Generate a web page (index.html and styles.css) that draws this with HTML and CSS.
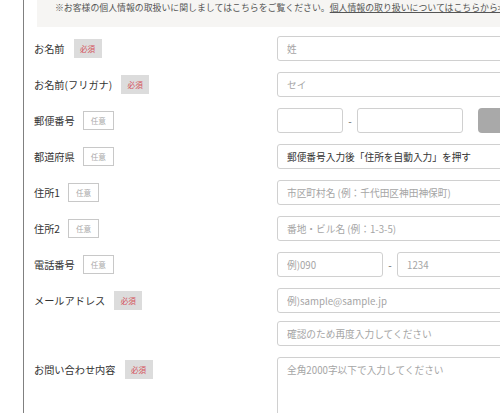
FILE: index.html
```html
<!DOCTYPE html>
<html lang="ja">
<head>
<meta charset="utf-8">
<title>お問い合わせ</title>
<link rel="stylesheet" href="styles.css">
</head>
<body>
<div class="page">
  <div class="notice">
    <p>※お客様の個人情報の取扱いに関しましてはこちらをご覧ください。<a href="#">個人情報の取り扱いについてはこちらから&gt;&gt;</a></p>
  </div>
  <form class="form">
    <div class="row">
      <div class="label">お名前<span class="badge req">必須</span></div>
      <div class="field"><input class="input full" placeholder="姓"></div>
    </div>
    <div class="row">
      <div class="label">お名前(フリガナ)<span class="badge req">必須</span></div>
      <div class="field"><input class="input full" placeholder="セイ"></div>
    </div>
    <div class="row">
      <div class="label">郵便番号<span class="badge opt">任意</span></div>
      <div class="field inline">
        <input class="input zip1">
        <span class="dash">-</span>
        <input class="input zip2">
        <button type="button" class="btn"></button>
      </div>
    </div>
    <div class="row">
      <div class="label">都道府県<span class="badge opt">任意</span></div>
      <div class="field"><div class="input full select">郵便番号入力後「住所を自動入力」を押す</div></div>
    </div>
    <div class="row">
      <div class="label">住所1<span class="badge opt">任意</span></div>
      <div class="field"><input class="input full" placeholder="市区町村名 (例：千代田区神田神保町)"></div>
    </div>
    <div class="row">
      <div class="label">住所2<span class="badge opt">任意</span></div>
      <div class="field"><input class="input full" placeholder="番地・ビル名 (例：1-3-5)"></div>
    </div>
    <div class="row">
      <div class="label">電話番号<span class="badge opt">任意</span></div>
      <div class="field inline">
        <input class="input tel" placeholder="例)090">
        <span class="dash">-</span>
        <input class="input tel" placeholder="1234">
      </div>
    </div>
    <div class="row">
      <div class="label">メールアドレス<span class="badge req">必須</span></div>
      <div class="field stack">
        <input class="input full" placeholder="例)sample@sample.jp">
        <input class="input full" placeholder="確認のため再度入力してください">
      </div>
    </div>
    <div class="row">
      <div class="label">お問い合わせ内容<span class="badge req">必須</span></div>
      <div class="field"><textarea class="input full area" placeholder="全角2000字以下で入力してください"></textarea></div>
    </div>
  </form>
</div>
</body>
</html>
```

FILE: styles.css
```css
html, body {
  margin: 0;
  padding: 0;
  background: #fff;
  overflow: hidden;
}
body {
  font-family: "Noto Sans CJK JP", "Noto Sans", sans-serif;
  color: #333;
  width: 500px;
  height: 413px;
}
.page {
  margin-left: 23px;
  border-left: 1px solid #808080;
  height: 413px;
  width: 700px;
}
.notice {
  margin-left: 13px;
  height: 27px;
  background: #f6f5f3;
  padding-left: 18px;
  box-sizing: border-box;
}
.notice p {
  margin: 0;
  padding-top: 2px;
  font-size: 8.9px;
  line-height: 12px;
  color: #555;
  white-space: nowrap;
}
.notice a {
  color: #555;
  text-decoration: underline;
}
.form {
  padding-left: 10px;
  padding-top: 9px;
  display: flex;
  flex-direction: column;
  gap: 11px;
}
.row {
  display: flex;
  align-items: flex-start;
}
.label {
  width: 243px;
  flex: none;
  height: 24px;
  display: flex;
  align-items: center;
  font-size: 10.2px;
  color: #333;
  white-space: nowrap;
}
.badge {
  margin-left: 9px;
  display: inline-flex;
  align-items: center;
  justify-content: center;
  height: 19px;
  font-size: 7.6px;
  box-sizing: border-box;
}
.req {
  width: 28px;
  background: #dcdcdc;
  color: #d4505a;
}
.opt {
  width: 31px;
  border: 1px solid #c8c8c8;
  background: #fff;
  color: #aaa;
  margin-left: 8px;
}
.field {
  display: flex;
}
.inline {
  align-items: center;
}
.stack {
  flex-direction: column;
  gap: 8px;
}
.input {
  font-family: "Noto Sans CJK JP", "Noto Sans", sans-serif;
  font-size: 9.7px;
  height: 25px;
  border: 1px solid #d0d0d0;
  border-radius: 3px;
  box-sizing: border-box;
  padding: 0 0 0 9px;
  margin: 0;
  background: #fff;
  color: #333;
  outline: none;
}
.input::placeholder {
  color: #a5a5a5;
}
.full {
  width: 260px;
}
.select {
  display: flex;
  align-items: center;
  color: #333;
}
.zip1 {
  width: 66px;
}
.zip2 {
  width: 106px;
}
.tel {
  width: 106px;
}
.dash {
  width: 14px;
  text-align: center;
  font-size: 10px;
  color: #666;
}
.btn {
  margin-left: 15px;
  width: 80px;
  height: 25px;
  border: none;
  border-radius: 4px;
  background: #a9a9a9;
  padding: 0;
}
.area {
  height: 90px;
  padding-top: 5px;
  resize: none;
  line-height: 14px;
}
```
